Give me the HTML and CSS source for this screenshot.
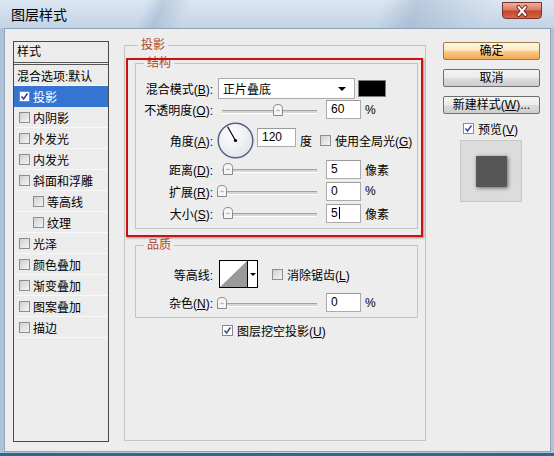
FILE: index.html
```html
<!DOCTYPE html>
<html lang="zh-CN">
<head>
<meta charset="utf-8">
<title>图层样式</title>
<link rel="stylesheet" href="styles.css">
</head>
<body>
<div class="window">
  <div class="titlebar">
    <span class="title">图层样式</span>
    <span class="close">
      <svg width="16" height="12" viewBox="0 0 16 12"><path d="M4.5 2 L11.5 10 M11.5 2 L4.5 10" stroke="#6b2014" stroke-width="3.8" stroke-linecap="round"/><path d="M4.5 2 L11.5 10 M11.5 2 L4.5 10" stroke="#ffffff" stroke-width="2" stroke-linecap="round"/></svg>
    </span>
  </div>
  <div class="content">
    <div class="list">
      <div class="list-head">样式</div>
      <div class="item plain">混合选项:默认</div>
      <div class="item selected"><span class="cb on"><svg width="9" height="9" viewBox="0 0 9 9"><path d="M1.5 4.5 L3.6 7 L7.5 1.5" fill="none" stroke="#3b3f9a" stroke-width="1.6"/></svg></span>投影</div>
      <div class="item"><span class="cb"></span>内阴影</div>
      <div class="item"><span class="cb"></span>外发光</div>
      <div class="item"><span class="cb"></span>内发光</div>
      <div class="item"><span class="cb"></span>斜面和浮雕</div>
      <div class="item sub"><span class="cb"></span>等高线</div>
      <div class="item sub"><span class="cb"></span>纹理</div>
      <div class="item"><span class="cb"></span>光泽</div>
      <div class="item"><span class="cb"></span>颜色叠加</div>
      <div class="item"><span class="cb"></span>渐变叠加</div>
      <div class="item"><span class="cb"></span>图案叠加</div>
      <div class="item"><span class="cb"></span>描边</div>
    </div>

    <div class="middle">
      <fieldset class="group outer">
        <legend>投影</legend>
        <fieldset class="group inner">
          <legend>结构</legend>
          <div class="row r-blend">
            <span class="lbl">混合模式(<u>B</u>):</span>
            <span class="select"><span>正片叠底</span><span class="arrow"></span></span>
            <span class="swatch"></span>
          </div>
          <div class="row r-opacity">
            <span class="lbl">不透明度(<u>O</u>):</span>
            <span class="slider"><span class="track"></span><svg class="thumb" style="left:56px" width="10" height="12" viewBox="0 0 10 12"><path d="M0.5 11.5 V4.5 Q0.5 0.5 5 0.5 Q9.5 0.5 9.5 4.5 V11.5 Z" fill="#f6f6f6" stroke="#8a8a8a"/><path d="M3 7 Q5 5 7 7" fill="none" stroke="#aaaaaa"/></svg></span>
            <span class="num">60</span>
            <span class="unit">%</span>
          </div>
          <div class="row r-angle">
            <span class="lbl">角度(<u>A</u>):</span>
            <svg class="dial" width="37" height="37" viewBox="0 0 37 37">
              <defs><radialGradient id="dg" cx="0.4" cy="0.35" r="0.7"><stop offset="0" stop-color="#ffffff"/><stop offset="1" stop-color="#e2e4ec"/></radialGradient></defs>
              <circle cx="18.5" cy="18.5" r="17.3" fill="url(#dg)" stroke="#5b5f80" stroke-width="1.5"/>
              <line x1="18.5" y1="18.5" x2="10.6" y2="4.8" stroke="#000" stroke-width="1.2"/>
              <circle cx="18.5" cy="18.5" r="1.6" fill="#000"/>
            </svg>
            <span class="num wide">120</span>
            <span class="unit">度</span>
            <span class="cb gap8"></span>
            <span class="cbtext">使用全局光(<u>G</u>)</span>
          </div>
          <div class="row r-dist">
            <span class="lbl">距离(<u>D</u>):</span>
            <span class="slider"><span class="track"></span><svg class="thumb" style="left:6px" width="10" height="12" viewBox="0 0 10 12"><path d="M0.5 11.5 V4.5 Q0.5 0.5 5 0.5 Q9.5 0.5 9.5 4.5 V11.5 Z" fill="#f6f6f6" stroke="#8a8a8a"/><path d="M3 7 Q5 5 7 7" fill="none" stroke="#aaaaaa"/></svg></span>
            <span class="num">5</span>
            <span class="unit">像素</span>
          </div>
          <div class="row r-spread">
            <span class="lbl">扩展(<u>R</u>):</span>
            <span class="slider"><span class="track"></span><svg class="thumb" style="left:0px" width="10" height="12" viewBox="0 0 10 12"><path d="M0.5 11.5 V4.5 Q0.5 0.5 5 0.5 Q9.5 0.5 9.5 4.5 V11.5 Z" fill="#f6f6f6" stroke="#8a8a8a"/><path d="M3 7 Q5 5 7 7" fill="none" stroke="#aaaaaa"/></svg></span>
            <span class="num">0</span>
            <span class="unit">%</span>
          </div>
          <div class="row r-size">
            <span class="lbl">大小(<u>S</u>):</span>
            <span class="slider"><span class="track"></span><svg class="thumb" style="left:6px" width="10" height="12" viewBox="0 0 10 12"><path d="M0.5 11.5 V4.5 Q0.5 0.5 5 0.5 Q9.5 0.5 9.5 4.5 V11.5 Z" fill="#f6f6f6" stroke="#8a8a8a"/><path d="M3 7 Q5 5 7 7" fill="none" stroke="#aaaaaa"/></svg></span>
            <span class="num">5<span class="caret"></span></span>
            <span class="unit">像素</span>
          </div>
        </fieldset>

        <fieldset class="group inner quality">
          <legend>品质</legend>
          <div class="row r-contour">
            <span class="lbl">等高线:</span>
            <span class="contour">
              <svg width="29" height="28" viewBox="0 0 29 28"><rect x="0.5" y="0.5" width="28" height="27" fill="#ffffff" stroke="#000"/><polygon points="1,27 28,1 28,27" fill="#9a9a9a"/></svg>
              <span class="dd"><span class="arrow small"></span></span>
            </span>
            <span class="cb gap14"></span>
            <span class="cbtext">消除锯齿(<u>L</u>)</span>
          </div>
          <div class="row r-noise">
            <span class="lbl">杂色(<u>N</u>):</span>
            <span class="slider"><span class="track"></span><svg class="thumb" style="left:0px" width="10" height="12" viewBox="0 0 10 12"><path d="M0.5 11.5 V4.5 Q0.5 0.5 5 0.5 Q9.5 0.5 9.5 4.5 V11.5 Z" fill="#f6f6f6" stroke="#8a8a8a"/><path d="M3 7 Q5 5 7 7" fill="none" stroke="#aaaaaa"/></svg></span>
            <span class="num">0</span>
            <span class="unit">%</span>
          </div>
        </fieldset>

        <div class="row r-knock">
          <span class="cb on knock"><svg width="9" height="9" viewBox="0 0 9 9"><path d="M1.5 4.5 L3.6 7 L7.5 1.5" fill="none" stroke="#3b4f9a" stroke-width="1.6"/></svg></span>
          <span class="cbtext">图层挖空投影(<u>U</u>)</span>
        </div>
      </fieldset>
    </div>

    <div class="right">
      <div class="btn default">确定</div>
      <div class="btn">取消</div>
      <div class="btn">新建样式(<u>W</u>)...</div>
      <div class="preview-row">
        <span class="cb on"><svg width="9" height="9" viewBox="0 0 9 9"><path d="M1.5 4.5 L3.6 7 L7.5 1.5" fill="none" stroke="#3b4f9a" stroke-width="1.6"/></svg></span>
        <span class="cbtext">预览(<u>V</u>)</span>
      </div>
      <div class="preview"><div class="square"></div></div>
    </div>
  </div>
  <div class="annotation"></div>
</div>
</body>
</html>
```

FILE: styles.css
```css
* { box-sizing: border-box; }
html, body { margin: 0; padding: 0; }
body {
  width: 554px;
  height: 456px;
  overflow: hidden;
  font-family: "Liberation Sans", "Noto Sans CJK SC", sans-serif;
  font-size: 12px;
  color: #000;
  background: #ffffff;
}
u { text-decoration: underline; text-underline-offset: 1px; }

.window {
  position: relative;
  width: 554px;
  height: 456px;
  display: flex;
  flex-direction: column;
  background: linear-gradient(90deg, #aec3d8, #c4d4e4 50%, #aec3d8);
  border-bottom: 3px solid #33668f;
}

.titlebar {
  height: 28px;
  flex: none;
  display: flex;
  justify-content: space-between;
  align-items: flex-start;
  padding: 0 12px 0 11px;
  background:
    linear-gradient(112deg, transparent 0 26%, rgba(110,140,175,.28) 29%, transparent 34%, transparent 68%, rgba(110,140,175,.30) 74%, rgba(110,140,175,.12) 82%, transparent 88%),
    linear-gradient(#dbe6f1, #c3d4e6);
}
.title {
  font-family: "Noto Sans CJK SC", sans-serif;
  font-size: 14px;
  line-height: 28px;
  color: #000;
}
.close {
  margin-top: 2px;
  width: 40px;
  height: 17px;
  border: 1px solid #7a3226;
  border-radius: 0 0 4px 4px;
  background: linear-gradient(#eeb0a0, #dc7a62 45%, #c4452c 55%, #d66848);
  display: flex;
  align-items: center;
  justify-content: center;
}
.close svg { display: block; }

.content {
  flex: 1;
  margin: 0 3px 1px 4px;
  border: 1px solid #8fa4ba;
  background: #ededed;
  display: flex;
  align-items: flex-start;
  padding: 8px 0 0 8px;
}

/* left style list */
.list {
  flex: none;
  width: 96px;
  height: 401px;
  margin-top: 4px;
  border: 1px solid #4a4a4a;
  background: #ececec;
}
.list-head {
  height: 23px;
  line-height: 20px;
  padding-left: 3px;
  border-bottom: 3px double #555555;
}
.item {
  height: 21px;
  display: flex;
  align-items: center;
  padding-left: 5px;
  border-bottom: 1px solid #f8f8f8;
  white-space: nowrap;
}
.item .cb { margin-right: 3px; }
.item.plain { padding-left: 3px; }
.item.sub { padding-left: 19px; }
.item.selected {
  background: #3674d2;
  color: #ffffff;
  border-bottom-color: #3674d2;
}

/* checkbox */
.cb {
  flex: none;
  width: 11px;
  height: 11px;
  border: 1px solid #8e8e8e;
  background: linear-gradient(135deg, #d0d0d0, #f4f4f4);
  display: flex;
  align-items: center;
  justify-content: center;
}
.cb.on { background: #ffffff; border-color: #8a8a8a; }
.cb svg { display: block; }
.cbtext { margin-left: 4px; white-space: nowrap; }
.gap8 { margin-left: 8px; }
.gap14 { margin-left: 14px; }

/* middle */
.middle {
  flex: none;
  width: 302px;
  margin-left: 15px;
}
.group {
  margin: 0;
  min-width: 0;
  border: 1px solid #c4c4c4;
}
.group > legend {
  padding: 0 3px;
  height: 16px;
  line-height: 16px;
  color: #b2472b;
  font-size: 12px;
}
.outer {
  height: 404px;
  padding: 2px 7px 0 10px;
}
.outer > legend { margin-left: 3px; }
.inner { padding: 6px 0 5px 0; }
.inner > legend { margin-left: 8px; }
.quality { margin-top: 8px; padding: 6px 0 4px 0; }

.row {
  display: flex;
  align-items: center;
  white-space: nowrap;
}
.lbl {
  flex: none;
  width: 77px;
  text-align: right;
}
.r-blend { height: 23px; }
.r-opacity { height: 19px; }
.r-angle { height: 38px; margin-top: 2px; }
.r-dist { height: 20px; }
.r-spread, .r-size { height: 20px; margin-top: 2px; }
.r-contour { height: 30px; }
.r-noise { height: 21px; margin-top: 3px; }
.r-knock { height: 18px; margin-top: 3px; }
.knock { margin-left: 87px; }

.select {
  flex: none;
  margin-left: 5px;
  width: 137px;
  height: 21px;
  border: 1px solid #a9a9a9;
  background: #ffffff;
  display: flex;
  align-items: center;
  justify-content: space-between;
  padding: 0 8px 0 4px;
}
.arrow {
  width: 0;
  height: 0;
  border-left: 4px solid transparent;
  border-right: 4px solid transparent;
  border-top: 4px solid #000;
}
.arrow.small {
  border-left-width: 3px;
  border-right-width: 3px;
  border-top-width: 3px;
}
.swatch {
  flex: none;
  margin-left: 3px;
  width: 28px;
  height: 17px;
  background: #000;
  border: 1px solid #7a7a7a;
}

.slider {
  position: relative;
  flex: none;
  margin-left: 4px;
  width: 105px;
  height: 12px;
  padding: 6px 5px 0 5px;
}
.track {
  display: block;
  height: 4px;
  border-top: 1px solid #a2a2a2;
  border-bottom: 1px solid #ffffff;
  background: #d6d6d6;
}
.thumb {
  position: absolute;
  top: 0;
  display: block;
}

.num {
  flex: none;
  margin-left: 4px;
  width: 35px;
  height: 19px;
  border: 1px solid #ababab;
  border-top-color: #9a9a9a;
  background: #ffffff;
  padding-left: 4px;
  line-height: 17px;
  display: flex;
  align-items: center;
}
.num.wide {
  width: 39px;
  margin-left: 3px;
  align-self: flex-start;
  margin-top: 7px;
}
.caret {
  display: inline-block;
  width: 1px;
  height: 12px;
  background: #000;
  margin-left: 1px;
}
.unit { margin-left: 4px; }
.dial { flex: none; margin-left: 4px; display: block; }

.contour {
  flex: none;
  margin-left: 6px;
  display: flex;
}
.contour svg { display: block; }
.dd {
  width: 10px;
  height: 28px;
  border: 1px solid #000;
  border-left: none;
  background: #ffffff;
  display: flex;
  align-items: center;
  justify-content: center;
}

/* right column */
.right {
  flex: none;
  width: 97px;
  margin-left: 17px;
  margin-top: 5px;
  display: flex;
  flex-direction: column;
}
.btn {
  height: 18px;
  margin-bottom: 9px;
  border: 1px solid #6f6f6f;
  border-radius: 2px;
  background: linear-gradient(#f4f4f4 0%, #ececec 48%, #dcdcdc 52%, #cdcdcd 100%);
  text-align: center;
  line-height: 16px;
  white-space: nowrap;
}
.btn.default {
  border-color: #9c7a4a;
  background: linear-gradient(#fff7e2 0%, #fde9c2 45%, #f9c882 55%, #f1a95a 100%);
}
.preview-row {
  height: 18px;
  margin-top: -4px;
  padding-left: 20px;
  display: flex;
  align-items: center;
}
.preview {
  margin-top: 3px;
  margin-left: 17px;
  width: 62px;
  height: 62px;
  background: #dcdcdc;
  border: 1px solid #c6c6c6;
  display: flex;
  align-items: center;
  justify-content: center;
}
.square {
  width: 31px;
  height: 31px;
  background: #565656;
  box-shadow: 1px 1px 4px rgba(0,0,0,.55);
}

/* red annotation frame drawn over the dialog */
.annotation {
  position: absolute;
  left: 126px;
  top: 58px;
  width: 297px;
  height: 179px;
  border: 2px solid #cc1111;
  box-shadow: 1px 1px 2px rgba(0,0,0,.4);
  pointer-events: none;
}
```
